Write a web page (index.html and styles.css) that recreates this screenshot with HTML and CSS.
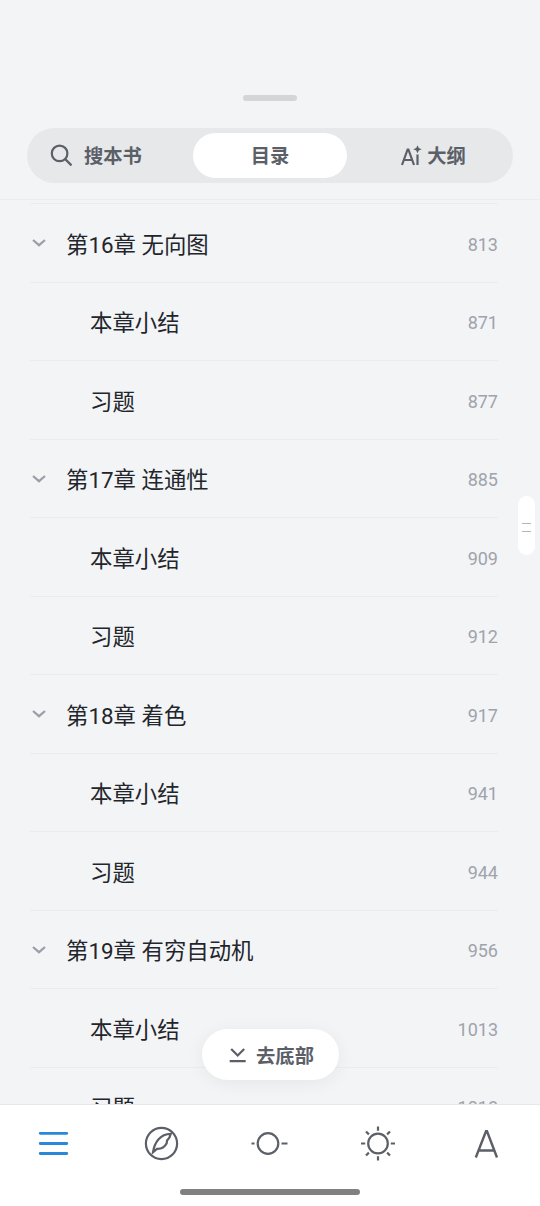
FILE: index.html
```
<!doctype html>
<html lang="zh-CN">
  <head>
    <meta charset="utf-8" />
    <meta name="viewport" content="width=device-width, initial-scale=1" />
    <title>目录</title>
    <link rel="stylesheet" href="styles.css">
  </head>
  <body>
    <header class="sheet-header">
      <div class="grabber"></div>
      <nav class="tabs">
        <div class="tab tab-search">
          <svg width="24" height="24" viewBox="0 0 24 24"><circle cx="9.6" cy="9.4" r="7.8"/><path d="M15.2 15.1L21.5 21.4"/></svg>
          <span>搜本书</span>
        </div>
        <div class="tab active"><span>目录</span></div>
        <div class="tab tab-outline">
          <svg width="20" height="20" viewBox="0 0 20 20">
            <path d="M1 19L6.6 3.5h.8L13 19M3 14h8M16.5 8.5V19"/>
            <path class="spark" d="M16.5-.8l1.3 2.8 2.9 1.2-2.9 1.2-1.3 2.9-1.3-2.9-2.9-1.2 2.9-1.2z"/>
          </svg>
          <span>大纲</span>
        </div>
      </nav>
    </header>

    <main class="toc">
      <ul class="toc-list">
        <li class="chapter"><svg class="chevron" width="14" height="9" viewBox="0 0 14 9"><path d="M1 2l6 5.2L13 2"/></svg><span class="title">第16章 无向图</span><span class="page">813</span></li>
        <li><span class="title">本章小结</span><span class="page">871</span></li>
        <li><span class="title">习题</span><span class="page">877</span></li>
        <li class="chapter"><svg class="chevron" width="14" height="9" viewBox="0 0 14 9"><path d="M1 2l6 5.2L13 2"/></svg><span class="title">第17章 连通性</span><span class="page">885</span></li>
        <li><span class="title">本章小结</span><span class="page">909</span></li>
        <li><span class="title">习题</span><span class="page">912</span></li>
        <li class="chapter"><svg class="chevron" width="14" height="9" viewBox="0 0 14 9"><path d="M1 2l6 5.2L13 2"/></svg><span class="title">第18章 着色</span><span class="page">917</span></li>
        <li><span class="title">本章小结</span><span class="page">941</span></li>
        <li><span class="title">习题</span><span class="page">944</span></li>
        <li class="chapter"><svg class="chevron" width="14" height="9" viewBox="0 0 14 9"><path d="M1 2l6 5.2L13 2"/></svg><span class="title">第19章 有穷自动机</span><span class="page">956</span></li>
        <li><span class="title">本章小结</span><span class="page">1013</span></li>
        <li><span class="title">习题</span><span class="page">1018</span></li>
      </ul>
      <div class="scroll-handle"></div>
      <button class="to-bottom">
        <svg width="18" height="16" viewBox="0 0 18 16"><path d="M3.2 2l6.5 6.5L16.2 2M1.7 14.2h16"/></svg>
        <span>去底部</span>
      </button>
    </main>

    <footer class="bottom">
      <nav class="toolbar">
        <div class="tool current">
          <svg width="36" height="36" viewBox="0 0 36 36"><path d="M4.2 8.3h26.6M4.2 18.5h26.6M4.2 28.5h26.6"/></svg>
        </div>
        <div class="tool">
          <svg width="36" height="36" viewBox="0 0 36 36">
            <circle cx="17.5" cy="18.5" r="15.6"/>
            <path d="M9 27.2C10.5 18 15.8 8.8 26.8 8.8 26.3 11.5 25 13.8 23 15.6L22.7 18.2C20.5 22.5 17.500 24 13 23.8z"/>
          </svg>
        </div>
        <div class="tool">
          <svg width="36" height="36" viewBox="0 0 36 36"><circle cx="16" cy="18.5" r="10.3"/><path d="M-.5 18.5h3M29.500 18.5h6"/></svg>
        </div>
        <div class="tool">
          <svg width="36" height="36" viewBox="0 0 36 36">
            <circle cx="18" cy="18.5" r="9.8"/>
            <path d="M18 1.500v4.200M18 31.300v4.200M1 18.500h4.200M30.800 18.500H35M6 6.500l2.900 2.900M27.100 27.600l2.900 2.900M30 6.500l-2.900 2.900M8.900 27.600L6 30.500"/>
          </svg>
        </div>
        <div class="tool">
          <svg width="36" height="36" viewBox="0 0 36 36"><path class="letter" d="M7.800 32.500L18 6.300h1L29 32.500M11.500 25.500h14"/></svg>
        </div>
      </nav>
      <div class="home-bar"></div>
    </footer>
  </body>
</html>
```
FILE: styles.css
```
* {
    box-sizing: border-box;
}
body {
    margin: 0;
    height: 1206px;
    display: flex;
    flex-direction: column;
    overflow: hidden;
    background: #f3f4f6;
    color: #22252b;
    font-family: Roboto, "Noto Sans CJK SC", sans-serif;
}
svg {
    display: block;
    flex: none;
    fill: none;
    stroke: #5b6068;
    stroke-width: 2.2;
    overflow: visible;
}
.sheet-header {
    height: 200px;
    flex: none;
    padding: 95px 27px 0;
    border-bottom: 1px solid #ebecee;
}
.grabber {
    width: 54px;
    height: 6px;
    margin: 0 auto 27px;
    border-radius: 3px;
    background: #d4d5d7;
}
.tabs {
    display: grid;
    grid-template-columns: 161px 154px 1fr;
    height: 55px;
    padding: 5px;
    border-radius: 28px;
    background: #e7e8ea;
}
.tab {
    display: flex;
    align-items: center;
    justify-content: center;
    border-radius: 23px;
    color: #5b6068;
    font-size: 19.3px;
    font-weight: 700;
    line-height: 28px;
}
.tab span {
    padding-top: 3px;
}
.tab.active {
    background: #fff;
}
.tab-search {
    justify-content: flex-start;
    padding-left: 18px;
    gap: 10px;
}
.tab-outline {
    gap: 6px;
    padding-left: 12px;
}
.tab-outline .spark {
    fill: #5b6068;
    stroke: none;
}

.toc {
    position: relative;
    flex: 1;
    min-height: 0;
    overflow: hidden;
    padding: 3px 42px 0 30px;
}
.toc-list {
    margin: 0;
    padding: 0;
    list-style: none;
    border-top: 1px solid #ebecee;
}
.toc-list li {
    display: flex;
    align-items: center;
    height: 78.5px;
    padding-left: 60px;
    border-bottom: 1px solid #ebecee;
}
.toc-list .chapter {
    padding-left: 2px;
}
.chevron {
    margin-right: 20px;
    stroke: #9b9ea8;
}
.title {
    flex: 1;
    padding-top: 4px;
    font-size: 22.4px;
    line-height: 32px;
}
.page {
    padding-top: 4px;
    color: #a0a3ac;
    font-size: 18px;
    line-height: 24px;
}
.scroll-handle {
    position: absolute;
    top: 296px;
    right: 5px;
    width: 17px;
    height: 59px;
    border-radius: 9px;
    background: #fff;
}
.scroll-handle::after {
    content: "";
    position: absolute;
    top: 27px;
    left: 4px;
    width: 9px;
    height: 7px;
    border: solid #b5b6b9;
    border-width: 1px 0;
}
.to-bottom {
    position: absolute;
    left: 202px;
    bottom: 24px;
    width: 137px;
    height: 51px;
    display: flex;
    align-items: center;
    justify-content: center;
    gap: 10px;
    padding: 0 0 0 1px;
    border: none;
    border-radius: 26px;
    background: #fff;
    box-shadow: 0 3px 18px rgba(0, 0, 0, 0.06);
    color: #5b6068;
    font: 700 19.3px/28px Roboto, "Noto Sans CJK SC", sans-serif;
}
.to-bottom span {
    padding-top: 4px;
}

.bottom {
    flex: none;
    height: 102px;
    border-top: 1px solid #e6e8eb;
    background: #fff;
}
.toolbar {
    display: grid;
    grid-template-columns: repeat(5, 1fr);
    height: 84px;
    padding-top: 20px;
}
.tool {
    display: flex;
    justify-content: center;
}
.tool.current svg {
    stroke: #2b88d9;
    stroke-width: 2.8;
    stroke-linecap: round;
}
.tool .letter {
    stroke-width: 2.4;
}
.home-bar {
    width: 180px;
    height: 6px;
    margin: 0 auto;
    border-radius: 3px;
    background: #808080;
}
```
